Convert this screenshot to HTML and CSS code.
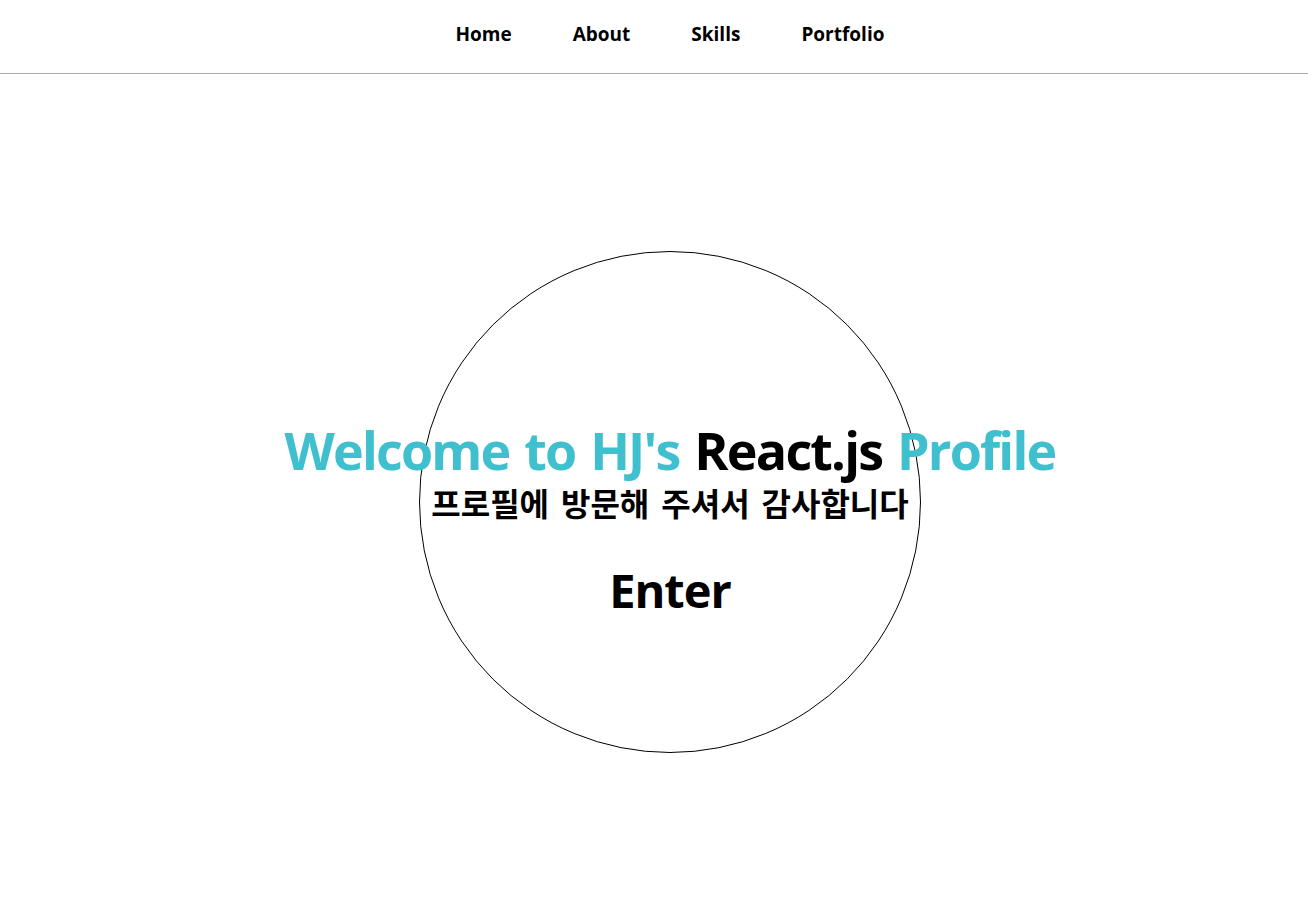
FILE: index.html
```html
<!DOCTYPE html>
<html lang="ko">
<head>
<meta charset="utf-8">
<title>HJ's React.js Profile</title>
<link rel="stylesheet" href="styles.css">
</head>
<body>
<header class="nav">
  <ul class="nav-list">
    <li class="nav-item">Home</li>
    <li class="nav-item">About</li>
    <li class="nav-item">Skills</li>
    <li class="nav-item">Portfolio</li>
  </ul>
</header>
<main class="hero">
  <div class="circle">
    <div class="intro">
      <h1 class="title"><span class="accent">Welcome to HJ's</span> React.js <span class="accent">Profile</span></h1>
      <p class="subtitle">프로필에 방문해 주셔서 감사합니다</p>
      <p class="enter">Enter</p>
    </div>
  </div>
</main>
</body>
</html>
```
FILE: styles.css
```css
* { box-sizing: border-box; }
html, body { margin: 0; padding: 0; background: #fff; }
body {
  font-family: "Open Sans", "Noto Sans CJK KR", sans-serif;
  color: #000;
}
.nav {
  height: 74px;
  border-bottom: 1px solid #aaa;
  display: flex;
  justify-content: center;
  padding-left: 32px;
}
.nav-list {
  list-style: none;
  margin: 0;
  padding: 0;
  display: flex;
  align-items: center;
  gap: 61px;
  height: 67px;
}
.nav-item {
  font-size: 19px;
  font-weight: 700;
}
.hero {
  display: flex;
  justify-content: center;
  padding-left: 32px;
  padding-top: 177px;
}
.circle {
  width: 502px;
  height: 502px;
  border: 1px solid #000;
  border-radius: 50%;
  display: flex;
  align-items: center;
  justify-content: center;
}
.intro {
  display: flex;
  flex-direction: column;
  align-items: center;
  white-space: nowrap;
  margin-top: 34px;
}
.title {
  margin: 0;
  font-size: 52px;
  font-weight: 700;
  line-height: 60px;
  letter-spacing: -1.8px;
  word-spacing: 3px;
  color: #000;
}
.accent { color: #40bfcf; }
.subtitle {
  margin: 0;
  font-family: "Noto Sans CJK KR", sans-serif;
  font-size: 32px;
  font-weight: 700;
  line-height: 44px;
  word-spacing: 3px;
}
.enter {
  margin: 38px 0 0;
  font-size: 47px;
  font-weight: 700;
  line-height: 56px;
  letter-spacing: -1px;
}
```
